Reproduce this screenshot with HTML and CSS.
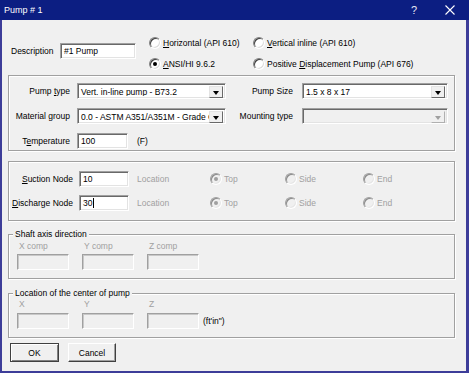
FILE: index.html
```html
<!DOCTYPE html>
<html>
<head>
<meta charset="utf-8">
<link rel="stylesheet" href="styles.css">
</head>
<body>
<div class="window">
  <div class="titlebar">
    <span class="title">Pump # 1</span>
    <span class="help">?</span>
    <svg class="close" width="10" height="10" viewBox="0 0 10 10"><path d="M0.5 0.5 L9.5 9.5 M9.5 0.5 L0.5 9.5" stroke="#fff" stroke-width="1.1" fill="none"/></svg>
  </div>
  <div class="client">
    <div class="top">
      <div class="desc">
        <span class="desc-lbl">Description</span>
        <div class="field w76">#1 Pump</div>
      </div>
      <div class="radios">
        <div class="radio"><span class="rc"></span><span><u>H</u>orizontal (API 610)</span></div>
        <div class="radio"><span class="rc"></span><span><u>V</u>ertical inline (API 610)</span></div>
        <div class="radio"><span class="rc on"></span><span><u>A</u>NSI/HI 9.6.2</span></div>
        <div class="radio"><span class="rc"></span><span>Positive <u>D</u>isplacement Pump (API 676)</span></div>
      </div>
    </div>

    <div class="group g1">
      <span class="lbl">Pump <u>t</u>ype</span>
      <div class="select"><span class="val">Vert. in-line pump - B73.2</span><span class="arrow"><i></i></span></div>
      <span class="lbl lbl2">Pump Size</span>
      <div class="select"><span class="val">1.5 x 8 x 17</span><span class="arrow"><i></i></span></div>

      <span class="lbl">Material group</span>
      <div class="select"><span class="val">0.0 - ASTM A351/A351M - Grade CF8M</span><span class="arrow"><i></i></span></div>
      <span class="lbl lbl2">Mounting type</span>
      <div class="select disabled"><span class="val"></span><span class="arrow"><i></i></span></div>

      <span class="lbl">T<u>e</u>mperature</span>
      <div class="temp"><div class="field w51">100</div><span class="unit">(F)</span></div>
    </div>

    <div class="group g2">
      <span class="lbl"><u>S</u>uction Node</span>
      <div class="field w50">10</div>
      <span class="loc">Location</span>
      <div class="radio dis"><span class="rc on"></span><span>Top</span></div>
      <div class="radio dis"><span class="rc"></span><span>Side</span></div>
      <div class="radio dis"><span class="rc"></span><span>End</span></div>

      <span class="lbl"><u>D</u>ischarge Node</span>
      <div class="field w50">30<span class="caret"></span></div>
      <span class="loc">Location</span>
      <div class="radio dis"><span class="rc on"></span><span>Top</span></div>
      <div class="radio dis"><span class="rc"></span><span>Side</span></div>
      <div class="radio dis"><span class="rc"></span><span>End</span></div>
    </div>

    <fieldset class="fs fs1">
      <legend>Shaft axis direction</legend>
      <div class="fs-grid">
        <span class="clbl">X comp</span>
        <span class="clbl">Y comp</span>
        <span class="clbl">Z comp</span>
        <span></span>
        <div class="field off"></div>
        <div class="field off"></div>
        <div class="field off"></div>
        <span></span>
      </div>
    </fieldset>

    <fieldset class="fs fs2">
      <legend>Location of the center of pump</legend>
      <div class="fs-grid">
        <span class="clbl">X</span>
        <span class="clbl">Y</span>
        <span class="clbl">Z</span>
        <span></span>
        <div class="field off"></div>
        <div class="field off"></div>
        <div class="field off"></div>
        <span class="ftin">(ft'in")</span>
      </div>
    </fieldset>

    <div class="buttons">
      <div class="btn default">OK</div>
      <div class="btn">Cancel</div>
    </div>
  </div>
</div>
</body>
</html>
```

FILE: styles.css
```css
* { box-sizing: border-box; }

body {
  margin: 0;
  font-family: "Liberation Sans", Arial, sans-serif;
  font-size: 8.5px;
  color: #000;
}

.window {
  width: 469px;
  height: 373px;
  background: #3d3d99;
  display: flex;
  flex-direction: column;
}

.titlebar {
  height: 20px;
  background: #0c1e82;
  display: flex;
  align-items: center;
  color: #fff;
  flex: none;
}

.title {
  padding-left: 4px;
  font-size: 9px;
}

.help {
  margin-left: auto;
  font-size: 11px;
  width: 8px;
  margin-right: 26px;
  color: #e8e8f4;
}

.close {
  margin-right: 14px;
  display: block;
}

.client {
  flex: 1;
  background: #f0f0f0;
  margin: 0 3px 2px 2px;
  display: flex;
  flex-direction: column;
}

u { text-decoration: underline; text-underline-offset: 1px; }

/* top area */
.top {
  display: flex;
  height: 55px;
  padding-left: 9px;
  flex: none;
}

.desc {
  display: flex;
  align-items: center;
  margin-top: 23px;
  height: 16px;
}

.desc-lbl { width: 49px; }

.field {
  height: 16px;
  background: #fff;
  border: 1px solid;
  border-color: #a0a0a0 #fff #fff #a0a0a0;
  box-shadow: inset 1px 1px 0 #696969, inset -1px -1px 0 #e3e3e3;
  padding-left: 3px;
  line-height: 14px;
  white-space: nowrap;
  overflow: hidden;
}

.field.off {
  background: #f0f0f0;
  box-shadow: inset 1px 1px 0 #c8c8c8;
}

.w76 { width: 76px; }
.w51 { width: 51px; }
.w50 { width: 50px; }

.caret {
  display: inline-block;
  width: 1px;
  height: 10px;
  background: #000;
  vertical-align: -2px;
  margin-left: 1px;
}

.radios {
  display: grid;
  grid-template-columns: 104px auto;
  grid-auto-rows: 21px;
  margin-left: 13px;
  margin-top: 12px;
  align-items: center;
}

.radio {
  display: flex;
  align-items: center;
  gap: 2px;
  white-space: nowrap;
}

.rc {
  width: 12px;
  height: 12px;
  border-radius: 50%;
  border: 1px solid;
  border-color: #808080 #fff #fff #808080;
  background: #fff;
  box-shadow: inset 1px 1px 0 #404040, inset -1px -1px 0 #dcdcdc;
  position: relative;
  flex: none;
}

.rc.on::after {
  content: "";
  position: absolute;
  left: 3px;
  top: 3px;
  width: 4px;
  height: 4px;
  border-radius: 50%;
  background: #000;
}

.radio.dis { color: #a0a0a0; }

.radio.dis .rc {
  background: #f0f0f0;
  border-color: #a0a0a0 #fff #fff #a0a0a0;
  box-shadow: inset 1px 1px 0 #8a8a8a, inset -1px -1px 0 #e6e6e6;
}

.radio.dis .rc.on::after { background: #a0a0a0; }

/* groups */
.group {
  margin-left: 6px;
  width: 447px;
  border: 1px solid #a0a0a0;
  box-shadow: inset 1px 1px 0 #fff, 1px 1px 0 #fff;
  display: grid;
  align-content: start;
  align-items: center;
  flex: none;
}

.lbl {
  text-align: right;
  padding-right: 7px;
  white-space: nowrap;
}

.g1 {
  height: 76px;
  grid-template-columns: 68px 149px 76px 146px;
  grid-template-rows: 16px 16px 16px;
  row-gap: 9px;
  padding-top: 7px;
}

.g1 .lbl2 { padding-right: 9px; }

.select {
  height: 16px;
  background: #fff;
  border: 1px solid;
  border-color: #a0a0a0 #fff #fff #a0a0a0;
  box-shadow: inset 1px 1px 0 #696969, inset -1px -1px 0 #e3e3e3;
  display: flex;
  padding: 2px 2px 2px 2px;
  overflow: hidden;
}

.select .val {
  flex: 1;
  padding-left: 1px;
  line-height: 12px;
  white-space: nowrap;
  overflow: hidden;
}

.select .arrow {
  width: 14px;
  flex: none;
  height: 12px;
  background: #f0f0f0;
  border: 1px solid;
  border-color: #e3e3e3 #696969 #696969 #e3e3e3;
  display: flex;
  align-items: center;
  justify-content: center;
}

.select .arrow i {
  display: block;
  width: 0;
  height: 0;
  border-left: 3.5px solid transparent;
  border-right: 3.5px solid transparent;
  border-top: 4px solid #000;
  margin-top: 1px;
}

.select.disabled { background: #f0f0f0; }
.select.disabled .arrow { border-color: #f0f0f0 #b0b0b0 #b0b0b0 #f0f0f0; }
.select.disabled .arrow i { border-top-color: #a0a0a0; }

.temp {
  display: flex;
  align-items: center;
}

.unit { margin-left: 9px; }

.g2 {
  margin-top: 10px;
  height: 60px;
  grid-template-columns: 70px 50px 81px 75px 78px 1fr;
  grid-template-rows: 16px 16px;
  row-gap: 8px;
  padding-top: 9px;
}

.g2 .lbl { padding-right: 6px; }

.loc {
  padding-left: 8px;
  color: #a0a0a0;
}

/* fieldsets */
.fs {
  margin: 0 0 0 6px;
  width: 447px;
  border: 1px solid #a0a0a0;
  box-shadow: inset 1px 1px 0 #fff, 1px 1px 0 #fff;
  padding: 0 8px 8px 8px;
  flex: none;
  min-inline-size: 0;
}

.fs legend {
  padding: 0 2px;
  margin-left: -4px;
  line-height: 11px;
  background: #f0f0f0;
}

.fs-grid {
  display: grid;
  grid-template-columns: 52px 52px 52px auto;
  column-gap: 13px;
  grid-template-rows: 10px 16px;
  align-items: center;
}

.fs1 { margin-top: 8px; }
.fs1 .fs-grid { margin-top: 1px; row-gap: 3px; }

.fs2 { margin-top: 9px; }
.fs2 .fs-grid { margin-top: 0; row-gap: 4px; }

.clbl {
  color: #a0a0a0;
  padding-left: 2px;
  line-height: 10px;
  white-space: nowrap;
}

.ftin { margin-left: -9px; }

/* buttons */
.buttons {
  display: flex;
  gap: 9px;
  padding-left: 8px;
  margin-top: 5px;
  flex: none;
}

.btn {
  height: 19px;
  width: 48px;
  background: #f0f0f0;
  border: 1px solid;
  border-color: #fff #404040 #404040 #fff;
  box-shadow: inset -1px -1px 0 #a0a0a0;
  display: flex;
  align-items: center;
  justify-content: center;
}

.btn.default {
  width: 49px;
  border-color: #404040;
  box-shadow: inset 1px 1px 0 #fff, inset -1px -1px 0 #808080;
}
```
